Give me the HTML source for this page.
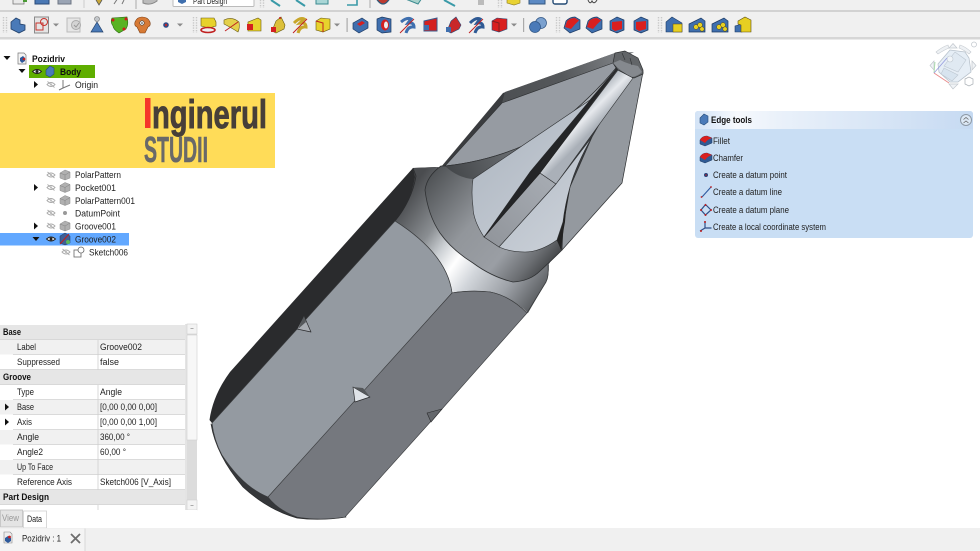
<!DOCTYPE html>
<html><head><meta charset="utf-8"><style>
html,body{margin:0;padding:0;background:#fff;width:980px;height:551px;overflow:hidden}
svg{display:block;filter:blur(.35px)}
text{font-family:"Liberation Sans",sans-serif;font-size:9px;fill:#1f1f1f}
.b{font-weight:bold;fill:#111}
</style></head><body>
<svg width="980" height="551" viewBox="0 0 980 551" xmlns="http://www.w3.org/2000/svg">
<defs>
<linearGradient id="collar" gradientUnits="userSpaceOnUse" x1="428" y1="178" x2="548" y2="278"><stop offset="0" stop-color="#505356"/><stop offset=".4" stop-color="#92969b"/><stop offset=".68" stop-color="#9a9ea4"/><stop offset=".85" stop-color="#6b6e72"/><stop offset="1" stop-color="#36383a"/></linearGradient>
<linearGradient id="neck" gradientUnits="userSpaceOnUse" x1="400" y1="205" x2="548" y2="310"><stop offset="0" stop-color="#4a4c4f"/><stop offset=".22" stop-color="#8a8e92"/><stop offset=".33" stop-color="#cdd1d5"/><stop offset=".43" stop-color="#fff"/><stop offset=".55" stop-color="#d2d6db"/><stop offset=".74" stop-color="#9ea2a8"/><stop offset=".95" stop-color="#505356"/></linearGradient>
<linearGradient id="flank" gradientUnits="userSpaceOnUse" x1="450" y1="172" x2="590" y2="115"><stop offset="0" stop-color="#44474a"/><stop offset=".5" stop-color="#6e7276"/><stop offset="1" stop-color="#aeb3b9"/></linearGradient>
<linearGradient id="strip" gradientUnits="userSpaceOnUse" x1="575" y1="112" x2="593" y2="130"><stop offset="0" stop-color="#aeb4bc"/><stop offset=".45" stop-color="#e6e9ed"/><stop offset="1" stop-color="#aab0b8"/></linearGradient>
<linearGradient id="mid" gradientUnits="userSpaceOnUse" x1="490" y1="240" x2="550" y2="178"><stop offset="0" stop-color="#92969c"/><stop offset="1" stop-color="#a6abb2"/></linearGradient>
<linearGradient id="lface" gradientUnits="userSpaceOnUse" x1="480" y1="170" x2="560" y2="250"><stop offset="0" stop-color="#b4bcc6"/><stop offset="1" stop-color="#c9cfd7"/></linearGradient>
<linearGradient id="band" gradientUnits="userSpaceOnUse" x1="505" y1="92" x2="615" y2="50"><stop offset="0" stop-color="#4d5053"/><stop offset=".5" stop-color="#55585b"/><stop offset="1" stop-color="#7b7e82"/></linearGradient>
<linearGradient id="hdr" x1="0" x2="1" y1="0" y2="0"><stop offset="0" stop-color="#d3e3f6"/><stop offset=".15" stop-color="#f6f9fd"/><stop offset=".3" stop-color="#eaf1fa"/><stop offset="1" stop-color="#c6daf2"/></linearGradient>
<symbol id="eh" overflow="visible"><path d="M-4 0Q0-4 4 0Q0 4-4 0Z" fill="none" stroke="#aaa" stroke-width=".9"/><path d="M-3.5-3L3.5 3" stroke="#aaa" stroke-width=".9"/><circle r="1.1" fill="#bbb"/></symbol>
<symbol id="ev" overflow="visible"><path d="M-4.5 0Q0-4 4.5 0Q0 4-4.5 0Z" fill="#fff" stroke="#222" stroke-width=".9"/><circle r="1.5" fill="#222"/></symbol>
<symbol id="ar" overflow="visible"><path d="M-2-3.5L2 0L-2 3.5Z" fill="#111"/></symbol>
<symbol id="ad" overflow="visible"><path d="M-3.5-2L3.5-2L0 2Z" fill="#111"/></symbol>
<symbol id="dd" overflow="visible"><path d="M-3-1.5L3-1.5L0 1.5Z" fill="#8a8a8a"/></symbol>
<symbol id="grip" overflow="visible"><path d="M-1.5-8V8M1.5-8V8" stroke="#c8c8c8" stroke-width="1.4" stroke-dasharray="1.4 1.2"/></symbol>
<symbol id="gp" overflow="visible"><path d="M-5-2L0-5L5-3V3L0 5L-5 3Z" fill="#b0b0b0" stroke="#8c8c8c" stroke-width=".5"/><path d="M-5-2L0 0L5-3M0 0V5" fill="none" stroke="#808080" stroke-width=".5"/></symbol>
<symbol id="bred" overflow="visible"><path d="M-7-2L2-7L8-3V3L-1 8L-7 4Z" fill="#3f6fae" stroke="#1d3a63" stroke-width=".7"/><path d="M-3-1L2-4L5-2L0 1Z" fill="#d42020"/></symbol>
<symbol id="rblue" overflow="visible"><path d="M-8 3L-6-4Q-2-8 3-8L8-5V4L-2 8Z" fill="#3f6fae" stroke="#1d3a63" stroke-width=".7"/><path d="M-7 2L-5-4Q-2-7 3-7L7-4.500Q3-1-1 4Z" fill="#d91f1f"/></symbol>
<symbol id="rbox" overflow="visible"><path d="M-7-4L0-8L7-5V5L0 8L-7 5Z" fill="#3f6fae" stroke="#1d3a63" stroke-width=".7"/><path d="M-5-3L5-4V4L-2 6L-5 4Z" fill="#d91f1f"/></symbol>
<symbol id="fil" overflow="visible"><path d="M-6 3V-1Q-4-5 1-5L6-3V2L-1 5Z" fill="#2f5a94" stroke="#1d3a63" stroke-width=".5"/><path d="M-6-1Q-4-5 1-5L6-3Q2-2-1 2Z" fill="#d91f1f"/></symbol>
<symbol id="by" overflow="visible"><path d="M-8 7V-1L4-7L8-4V7Z" fill="#3f6fae" stroke="#1d3a63" stroke-width=".7"/><g fill="#e6cf22" stroke="#5c4d10" stroke-width=".5"><circle cx="-1" cy="2" r="2.400"/><circle cx="3" cy="0" r="2.400"/><circle cx="5" cy="4" r="2.200"/></g></symbol>
</defs>

<rect width="980" height="551" fill="#fff"/>

<!-- toolbars -->
<rect width="980" height="39" fill="#f0f0f0"/>
<rect y="10" width="980" height="2" fill="#d2d2d2"/>
<rect y="37" width="980" height="2.500" fill="#d6d6d6"/>

<!-- top row remnants -->
<g>
<rect x="13" y="-6" width="11" height="10" fill="#e9e9e9" stroke="#777" stroke-width=".8"/><rect x="23" y="-2" width="4" height="4" fill="#4a9a35"/>
<rect x="35" y="-8" width="14" height="12" fill="#4a78b4" stroke="#2a4a78"/>
<rect x="58" y="-8" width="13" height="12" fill="#9aa4b4" stroke="#6e7684"/>
<path d="M84-2V8" stroke="#ccc"/>
<path d="M96 0L99 5L102 0" fill="#c9a83a" stroke="#555" stroke-width=".8"/><path d="M114 4L118-2M122 4L124 0" stroke="#777" fill="none"/>
<path d="M136-2V9" stroke="#aaa"/>
<path d="M143 3Q150 6 157 1V-3H143Z" fill="#bbb" stroke="#888"/>
<rect x="173" y="-4" width="81" height="10.500" rx="1" fill="#fff" stroke="#bbb"/>
<path d="M178-2H186V2L182 4L178 2Z" fill="#3f6fae"/>
<text x="193" y="4" textLength="34" lengthAdjust="spacingAndGlyphs">Part Design</text>
<use href="#grip" x="262" y="0"/>
<g stroke="#3a9aa8" stroke-width="2" fill="none"><path d="M271 0L280 6"/><path d="M296 0L305 6"/></g>
<path d="M316-2H328V4H316Z" fill="#a9d6d6" stroke="#3a8a90"/>
<path d="M347 5H357V0" fill="none" stroke="#3a9aa8" stroke-width="1.600"/>
<path d="M370-2V8" stroke="#aaa"/>
<path d="M376-2Q383 10 390-2" fill="#bd3a30" stroke="#2f5a7a" stroke-width="1.300"/>
<path d="M408 0L418 4L422-2Z" fill="#a8d2cc" stroke="#3a8a90"/>
<path d="M444 0L455 6" stroke="#3a9aa8" stroke-width="2"/>
<rect x="478" y="-2" width="6" height="7" fill="#bbb"/>
<use href="#grip" x="500" y="0"/>
<path d="M507 0L514-3L520 0V3L514 5L507 3Z" fill="#e8d232" stroke="#8a7a20" stroke-width=".6"/>
<rect x="529" y="-6" width="16" height="10" fill="#5c8ac4" stroke="#35577f"/>
<rect x="553" y="-6" width="14" height="10" rx="2" fill="#fff" stroke="#234a74" stroke-width="1.400"/>
<path d="M588 0Q590 5 592 1Q594 5 597 0" fill="none" stroke="#444"/>
</g>

<!-- row 2 -->
<g transform="translate(0,25)">
<use href="#grip" x="5"/><use href="#grip" x="195"/><use href="#grip" x="558"/><use href="#grip" x="660"/>
<path d="M11-3L16-7L20-5V-1L25 0V5L19 8L11 4Z" fill="#4a7ab8" stroke="#213f68" stroke-width=".8"/>
<rect x="34.500" y="-8" width="14" height="16" fill="#e4e4e4" stroke="#8a8a8a"/><rect x="36" y="-2" width="7" height="7" fill="none" stroke="#c8332d"/><circle cx="44" cy="-3" r="3.500" fill="none" stroke="#c8332d"/>
<use href="#dd" x="56"/>
<rect x="67" y="-7" width="13" height="14" fill="#e6e6e6" stroke="#bbb"/><circle cx="76" cy="0" r="4.500" fill="#d4d4d4" stroke="#aaa"/><path d="M74 0L76 2L79-2" fill="none" stroke="#999"/>
<path d="M97-3L91 7H103Z" fill="#4a7ab8" stroke="#213f68" stroke-width=".7"/><circle cx="97" cy="-6" r="2.500" fill="#c2c6ca" stroke="#777" stroke-width=".6"/>
<path d="M112-7L127-8Q129-1 126 4L119 8Q113 4 113 1Q110-3 112-7Z" fill="#59b324" stroke="#2c6b12" stroke-width=".6"/><g fill="#d11c1c"><circle cx="113" cy="-5" r="1.500"/><circle cx="126" cy="-6" r="1.500"/><circle cx="124" cy="4" r="1.500"/></g>
<path d="M135-3Q137-8 142-8Q148-8 150-3Q151 1 148 2L145 8H140L137 2Q134 1 135-3Z" fill="#d77a35" stroke="#7a3c12" stroke-width=".6"/><circle cx="142" cy="-2" r="2.200" fill="#fff" stroke="#333" stroke-width=".6"/><circle cx="142" cy="-2" r=".8" fill="#222"/>
<circle cx="166" cy="0" r="2.800" fill="#2f4d86"/><circle cx="166" cy="0" r="1.200" fill="#c0282a"/>
<use href="#dd" x="180"/>
<path d="M201-7H214L216-3V1L209 3L201 1Z" fill="#e7d22c" stroke="#6a5a10" stroke-width=".6"/><ellipse cx="208" cy="5" rx="7" ry="2.500" fill="none" stroke="#c02020" stroke-width="1.600"/>
<path d="M224-5Q232-9 239-3Q240 3 238 7Q230 2 224-1Z" fill="#e4d04a" stroke="#6a5a10" stroke-width=".6"/><path d="M225 6L238-3" stroke="#c02020"/>
<path d="M248-3L258-7L261-5V6H248Z" fill="#e7d22c" stroke="#6a5a10" stroke-width=".6"/><rect x="247" y="-1" width="6" height="6" fill="#d42020"/>
<path d="M272 6L276-4L281-8L285 0L284 4L276 8Z" fill="#dcc03a" stroke="#6a5a10" stroke-width=".6"/><rect x="271" y="2" width="5" height="5" fill="#d42020"/><circle cx="280" cy="-7" r="1" fill="#c02020"/>
<path d="M294-2Q300-8 304-6L300-2Q306-3 306 2Q300 1 298 8" fill="none" stroke="#c8a62a" stroke-width="3"/><path d="M293 8L307-6" stroke="#c02020"/>
<path d="M316-4L321-7L330-6V4L323 7L316 5Z" fill="#e7d22c" stroke="#6a5a10" stroke-width=".6"/><path d="M316-4L323-2V7" fill="none" stroke="#c02020"/>
<use href="#dd" x="337"/>
<rect x="346.500" y="-7" width="1.200" height="14" fill="#aaa"/>
<use href="#bred" x="360"/>
<path d="M377-6L382-8L391-6V7L382 8L377 5Z" fill="#3f6fae" stroke="#1d3a63" stroke-width=".7"/><ellipse cx="385" cy="0" rx="4" ry="5.500" fill="#d42020"/><ellipse cx="386" cy="0" rx="2" ry="3.500" fill="#eee"/>
<path d="M401-3Q407-8 411-6L408-2Q414-3 414 2Q408 1 406 8" fill="none" stroke="#3f6fae" stroke-width="3"/><path d="M400 8L414-6" stroke="#c02020"/>
<path d="M424-4L437-7V6H424Z" fill="#d42020" stroke="#3a5a8c"/><rect x="424" y="0" width="5" height="5" fill="#3f6fae"/>
<path d="M447 6L451-4L456-8L461 0L459 4L451 8Z" fill="#c8282a" stroke="#2a4a78" stroke-width=".6"/><rect x="446" y="2" width="5" height="5" fill="#3f6fae"/>
<path d="M470-2Q476-8 480-6L477-2Q483-3 483 2Q477 1 475 8" fill="none" stroke="#2f5a94" stroke-width="3"/><path d="M469 8L483-6" stroke="#c02020"/>
<path d="M492-4L497-7L507-6V4L499 7L492 5Z" fill="#d91f1f" stroke="#2a4a78" stroke-width=".6"/><path d="M492-4L499-2V7" fill="none" stroke="#802020"/>
<use href="#dd" x="514"/>
<rect x="523" y="-7" width="1.200" height="14" fill="#aaa"/>
<circle cx="541" cy="-2" r="5.500" fill="#7ba1cf" stroke="#2e5484" stroke-width=".7"/><circle cx="535" cy="2" r="5.500" fill="#4a7ab8" stroke="#2e5484" stroke-width=".7"/>
<use href="#rblue" x="572"/><use href="#rblue" x="594"/><use href="#rbox" x="617"/><use href="#rbox" x="641"/>
<path d="M666 7V-3L672-8L682-2V7Z" fill="#3f6fae" stroke="#1d3a63" stroke-width=".6"/><rect x="673" y="-1" width="9" height="8" fill="#e6cf22" stroke="#5c4d10" stroke-width=".5"/>
<use href="#by" x="697"/><use href="#by" x="720"/>
<path d="M735 7V1L742-1V7Z" fill="#3f6fae" stroke="#1d3a63" stroke-width=".6"/><path d="M738-4L745-8L751-5V7H741V0L738-1Z" fill="#e6cf22" stroke="#5c4d10" stroke-width=".6"/>
</g>

<!-- tree -->
<rect x="29" y="65" width="66" height="13" fill="#5fae00"/>
<rect x="0" y="233" width="129" height="12.500" fill="#62a8ff"/>
<use href="#ad" x="7" y="58"/><use href="#ad" x="22" y="71"/>
<path d="M18 53H24L26 55V64H18Z" fill="#f4f4f4" stroke="#777" stroke-width=".7"/><path d="M20 58L23 56L25 58V61L22 63L20 61Z" fill="#2e5a9c"/><circle cx="24" cy="59" r="1.300" fill="#c82020"/>
<text class="b" x="32" y="62" textLength="33" lengthAdjust="spacingAndGlyphs">Pozidriv</text>
<use href="#ev" x="37" y="71.500"/>
<path d="M46 70L50 66L54 68V74L50 77L46 75Z" fill="#4a7ab8" stroke="#234a78" stroke-width=".6"/>
<text class="b" x="60" y="75" textLength="21" lengthAdjust="spacingAndGlyphs">Body</text>
<use href="#ar" x="36" y="84.500"/><use href="#eh" x="51" y="84.500"/>
<path d="M63 80V88M63 88L70 85M63 88L59 90" stroke="#777" stroke-width="1" fill="none"/>
<text x="75" y="88" textLength="23" lengthAdjust="spacingAndGlyphs">Origin</text>

<g><use href="#eh" x="51" y="175"/><use href="#gp" x="65" y="175"/><text x="75" y="178" textLength="46" lengthAdjust="spacingAndGlyphs">PolarPattern</text></g>
<g><use href="#ar" x="36" y="187.500"/><use href="#eh" x="51" y="187.500"/><use href="#gp" x="65" y="187.500"/><text x="75" y="191" textLength="41" lengthAdjust="spacingAndGlyphs">Pocket001</text></g>
<g><use href="#eh" x="51" y="200.500"/><use href="#gp" x="65" y="200.500"/><text x="75" y="204" textLength="60" lengthAdjust="spacingAndGlyphs">PolarPattern001</text></g>
<g><use href="#eh" x="51" y="213"/><circle cx="65" cy="213" r="2" fill="#999"/><text x="75" y="216.500" textLength="45" lengthAdjust="spacingAndGlyphs">DatumPoint</text></g>
<g><use href="#ar" x="36" y="226"/><use href="#eh" x="51" y="226"/><use href="#gp" x="65" y="226"/><text x="75" y="229.500" textLength="41" lengthAdjust="spacingAndGlyphs">Groove001</text></g>
<g><use href="#ad" x="36" y="239"/><use href="#ev" x="51" y="239"/><path d="M60 236L65 233L70 236V243L65 245L60 243Z" fill="#3f5f96" stroke="#1d3a63" stroke-width=".5"/><path d="M60 244L69 234" stroke="#c02020"/><circle cx="68" cy="242" r="2" fill="#5cb85c"/><text x="75" y="242.500" textLength="41" lengthAdjust="spacingAndGlyphs">Groove002</text></g>
<g><use href="#eh" x="66" y="252"/><rect x="74" y="250" width="7" height="7" fill="#fff" stroke="#666" stroke-width=".8"/><circle cx="81" cy="250" r="3" fill="#fff" stroke="#666" stroke-width=".8"/><text x="89" y="255.500" textLength="39" lengthAdjust="spacingAndGlyphs">Sketch006</text></g>

<!-- banner -->
<rect x="0" y="93" width="275" height="75" fill="#ffdc58"/>
<rect x="145" y="98" width="5.500" height="30" fill="#f5352a"/>
<text x="152" y="128" textLength="115" lengthAdjust="spacingAndGlyphs" style="font-family:'Liberation Sans Narrow','Liberation Sans',sans-serif;font-size:40px;font-weight:bold;fill:#473f39;stroke:#473f39;stroke-width:.9px">nginerul</text>
<text x="144" y="162" textLength="64" lengthAdjust="spacingAndGlyphs" style="font-family:'Liberation Sans Narrow','Liberation Sans',sans-serif;font-size:36px;font-weight:bold;fill:#696969;stroke:#696969;stroke-width:.6px">STUDII</text>

<!-- property table -->
<g>
<rect x="0" y="325" width="185" height="185" fill="#fff"/>
<rect x="0" y="325" width="185" height="14.500" fill="#e6e6e6"/>
<rect x="0" y="340" width="185" height="14.500" fill="#f1f1f1"/>
<rect x="0" y="370" width="185" height="14.500" fill="#e6e6e6"/>
<rect x="0" y="400" width="185" height="14.500" fill="#f1f1f1"/>
<rect x="0" y="430" width="185" height="14.500" fill="#f1f1f1"/>
<rect x="0" y="460" width="185" height="14.500" fill="#f1f1f1"/>
<rect x="0" y="490" width="185" height="14.500" fill="#e6e6e6"/>
<g stroke="#cfcfcf" stroke-width=".8"><path d="M0 339.500H185M13 354.500H185M0 369.500H185M0 384.500H185M13 399.500H185M13 414.500H185M13 429.500H185M13 444.500H185M13 459.500H185M13 474.500H185M0 489.500H185M0 504.500H185"/></g>
<g stroke="#cfcfcf" stroke-width=".8"><path d="M98 340V370M98 385V490M98 505V510"/></g>
<text class="b" x="3" y="335" textLength="18" lengthAdjust="spacingAndGlyphs">Base</text>
<text x="17" y="350" textLength="19" lengthAdjust="spacingAndGlyphs">Label</text><text x="100" y="350" textLength="42" lengthAdjust="spacingAndGlyphs">Groove002</text>
<text x="17" y="365" textLength="43" lengthAdjust="spacingAndGlyphs">Suppressed</text><text x="100" y="365" textLength="19" lengthAdjust="spacingAndGlyphs">false</text>
<text class="b" x="3" y="380" textLength="28" lengthAdjust="spacingAndGlyphs">Groove</text>
<text x="17" y="395" textLength="17" lengthAdjust="spacingAndGlyphs">Type</text><text x="100" y="395" textLength="22" lengthAdjust="spacingAndGlyphs">Angle</text>
<use href="#ar" x="7" y="407"/>
<text x="17" y="410" textLength="17" lengthAdjust="spacingAndGlyphs">Base</text><text x="100" y="410" textLength="57" lengthAdjust="spacingAndGlyphs">[0,00 0,00 0,00]</text>
<use href="#ar" x="7" y="422"/>
<text x="17" y="425" textLength="15" lengthAdjust="spacingAndGlyphs">Axis</text><text x="100" y="425" textLength="57" lengthAdjust="spacingAndGlyphs">[0,00 0,00 1,00]</text>
<text x="17" y="440" textLength="22" lengthAdjust="spacingAndGlyphs">Angle</text><text x="100" y="440" textLength="30" lengthAdjust="spacingAndGlyphs">360,00 °</text>
<text x="17" y="455" textLength="26" lengthAdjust="spacingAndGlyphs">Angle2</text><text x="100" y="455" textLength="26" lengthAdjust="spacingAndGlyphs">60,00 °</text>
<text x="17" y="470" textLength="36" lengthAdjust="spacingAndGlyphs">Up To Face</text>
<text x="17" y="485" textLength="55" lengthAdjust="spacingAndGlyphs">Reference Axis</text><text x="100" y="485" textLength="71" lengthAdjust="spacingAndGlyphs">Sketch006 [V_Axis]</text>
<text class="b" x="3" y="500" textLength="46" lengthAdjust="spacingAndGlyphs">Part Design</text>
<!-- scrollbar -->
<rect x="185" y="324" width="2" height="186" fill="#e4e4e4"/>
<rect x="187" y="324" width="10" height="186" fill="#dcdcdc"/>
<rect x="187" y="324" width="10" height="10" fill="#f3f3f3" stroke="#cfcfcf" stroke-width=".6"/>
<rect x="187" y="335" width="10" height="105" fill="#f7f7f7" stroke="#cfcfcf" stroke-width=".6"/>
<rect x="187" y="500" width="10" height="10" fill="#f3f3f3" stroke="#cfcfcf" stroke-width=".6"/>
<rect x="190.500" y="328" width="3" height="1" fill="#aaa"/><rect x="190.500" y="505" width="3" height="1" fill="#aaa"/>
</g>

<!-- bottom tabs -->
<rect x="0" y="510" width="197" height="18" fill="#fff"/>
<rect x="0.500" y="510" width="22" height="17" fill="#e4e4e4" stroke="#bdbdbd" stroke-width=".8"/>
<text x="2" y="521" textLength="17" lengthAdjust="spacingAndGlyphs" style="fill:#999">View</text>
<rect x="23.500" y="511" width="23" height="17" fill="#fff" stroke="#d0d0d0" stroke-width=".8"/>
<text x="27" y="522" textLength="15" lengthAdjust="spacingAndGlyphs">Data</text>
<rect x="0" y="528" width="980" height="23" fill="#f0f0f0"/>
<rect x="0" y="529" width="85" height="22" fill="#f4f4f4"/>
<path d="M85 528.500V551" stroke="#d8d8d8"/>
<path d="M4 532H10L12 534V543H4Z" fill="#eee" stroke="#888" stroke-width=".6"/><path d="M5 538L8 536L11 538V541L8 543L5 541Z" fill="#2e5a9c"/><circle cx="9.500" cy="537" r="1.400" fill="#c82020"/>
<text x="22" y="541.500" textLength="39" lengthAdjust="spacingAndGlyphs">Pozidriv : 1</text>
<path d="M71 534L80 543M80 534L71 543" stroke="#6e6e6e" stroke-width="1.800"/>

<!-- MODEL -->
<g stroke-linejoin="round">
<!-- base under tip, closes gaps -->
<path d="M441 167L503 93L615 53L638 60L643 72L622 183L562 250L445 175Z" fill="#3a3c3f"/>
<!-- bottom sliver -->
<path d="M211 424Q216 455 243 487Q268 510 297 518Q320 521 346 517L268 496Z" fill="#35373a" stroke="#2a2b2d" stroke-width=".7"/>
<!-- black face -->
<path d="M413 168L436 167L416 200L395 222L212 423L209.500 420Q213 395 230 372Z" fill="#2a2b2d"/>
<!-- neck -->
<path d="M413 168L438 167L560 245L549 264Q549 276 546 282L528 313Q510 296 490 292Q470 290 452 293Q447 254 395 221Q410 205 415 177Z" fill="url(#neck)"/>
<path d="M395 221Q447 254 452 293Q470 290 490 292Q510 296 527 313" fill="none" stroke="#3a3c3e" stroke-width=".8"/>
<path d="M548 265Q549 276 546 282L527 313" fill="none" stroke="#3a3c3e" stroke-width=".8"/>
<path d="M413 168L416 176Q412 200 395 221" fill="none" stroke="#2a2b2d" stroke-width=".8"/>
<!-- light face -->
<path d="M212 423L395 221Q447 254 452 293L355 402L268 497Q243 487 222 455Q214 440 212 423Z" fill="#949aa1" stroke="#3a3c3e" stroke-width=".6"/>
<!-- dark face -->
<path d="M452 293Q470 290 490 292Q510 296 527 313L442 409L345 517Q320 521 297 517Q278 510 268 497Z" fill="#75787e" stroke="#3a3c3e" stroke-width=".6"/>
<!-- notches -->
<path d="M304 316L297 329L311 332Z" fill="#a8acb2" stroke="#2a2b2d" stroke-width=".7"/><path d="M304 316L298 329L306 322Z" fill="#55585b"/>
<path d="M353 387L370 397L355 402Z" fill="#dfe3e8" stroke="#2a2b2d" stroke-width=".7"/><path d="M353 387L370 397L363 388Z" fill="#55585b"/>
<path d="M427 413L442 409L431 422Z" fill="#64676c" stroke="#2a2b2d" stroke-width=".6"/>
<!-- collar -->
<path d="M441 166Q427 176 425 190Q428 215 440 233Q452 250 473 263Q492 277 513 282Q530 281 540 271Q552 260 562 250L557 240L533 180L473 170L446 166Z" fill="url(#collar)" stroke="#2f3133" stroke-width=".8"/>
<!-- right big face -->
<path d="M562 250L622 183L643 72L630 70L592 137L570 187L563 227Z" fill="#94999f" stroke="#2f3133" stroke-width=".7"/>
<!-- black sliver right -->
<path d="M570 187Q565 205 563 222Q559 234 557 240L561 250Q563 232 565 222Q566 205 570 187Z" fill="#222"/>
<!-- top band -->
<path d="M505 92L615 53L634 52L613 63L613 70L502 103Z" fill="url(#band)"/>
<!-- top flat face -->
<path d="M502 103L613 63L616 68Q590 100 545 135Q500 160 445 166Z" fill="#969ba2" stroke="#2f3133" stroke-width=".6"/>
<!-- flank -->
<path d="M445 166Q500 160 545 135Q590 100 616 68L612 75L590 100L473 179Q458 178 445 166Z" fill="url(#flank)"/>
<path d="M445 166Q500 160 545 135Q590 100 616 68" fill="none" stroke="#2f3133" stroke-width=".7"/>
<!-- upper light face -->
<path d="M473 179L590 100L617 68L530 172L484 237Q473 220 473 207Q471 192 473 179Z" fill="url(#lface)" stroke="#2f3133" stroke-width=".6"/>
<!-- mid strip -->
<path d="M484 237L540 173L556 184L499 247Z" fill="url(#mid)" stroke="#2f3133" stroke-width=".6"/>
<!-- upper strip -->
<path d="M540 173L618 70L633 78L556 184Z" fill="url(#strip)" stroke="#2f3133" stroke-width=".6"/>
<!-- lower light face -->
<path d="M499 247L556 184L592 137Q576 165 570 187Q565 205 563 222L557 240Q540 252 525 252Q510 252 499 247Z" fill="url(#lface)" stroke="#2f3133" stroke-width=".6"/>
<!-- slit -->
<path d="M484 237L530 172L618 67L540 173Z" fill="#242527"/>
<path d="M484 237L540 173L618 68" fill="none" stroke="#222" stroke-width=".6"/>
<!-- tip -->
<path d="M613 63L615 53L625 51L638 58L643 70L643 74L634 78L618 70Z" fill="#626568" stroke="#2f3133" stroke-width=".7"/>
<path d="M613 63Q621 72 632 77Q638 76 642 72L638 66Q628 64 620 60Z" fill="#85898e"/>
<path d="M622 53L625 60M630 58L632 65" stroke="#2f3133" stroke-width=".6" fill="none"/>
</g>

<!-- navicube -->
<g>
<path d="M950 50L965 52L969 58L971 72L958 82L950 82L939 72L938 64Z" fill="#e6eef6" stroke="#b8c2cc" stroke-width=".8"/>
<path d="M944 66L955 52L966 60L958 72Z" fill="#e0e9f2" stroke="#bcc6d0" stroke-width=".6"/>
<path d="M944 68L958 75L952 81L941 74Z" fill="#d8e4ef" stroke="#bcc6d0" stroke-width=".6"/>
<circle cx="950" cy="59" r="3" fill="#f1f5f9" stroke="#c0c8d0" stroke-width=".6"/>
<path d="M953 43.500L957 48H949Z" fill="#f0f3f6" stroke="#c0c6cc" stroke-width=".7"/>
<path d="M934 61L930 65.500L934 70Z" fill="#f0f3f6" stroke="#c0c6cc" stroke-width=".7"/>
<path d="M972 61L976 65.500L972 70Z" fill="#f0f3f6" stroke="#c0c6cc" stroke-width=".7"/>
<path d="M949 84L953 89L958 84Z" fill="#f0f3f6" stroke="#c0c6cc" stroke-width=".7"/>
<path d="M936 52Q942 47 948 45L949 48Q944 50 938 54Z" fill="#eef1f4" stroke="#c4cad0" stroke-width=".6"/>
<path d="M960 45Q966 47 971 52L969 54Q964 50 959 48Z" fill="#eef1f4" stroke="#c4cad0" stroke-width=".6"/>
<circle cx="974" cy="44.500" r="2.500" fill="#fff" stroke="#c0c6cc" stroke-width=".7"/>
<path d="M965 79L969 77L973 79V84L969 86L965 84Z" fill="#fff" stroke="#aab0b6" stroke-width=".7"/>
<path d="M934 73L949 83" stroke="#e88a8a" stroke-width=".9"/><path d="M934 73L935 62" stroke="#a8dca8" stroke-width=".9"/><path d="M934 73L947 58" stroke="#9aa0e0" stroke-width=".9"/>
</g>

<!-- edge tools panel -->
<rect x="695" y="111" width="278" height="127" rx="3" fill="#c9def4"/>
<path d="M695 129V114a3 3 0 0 1 3-3H970a3 3 0 0 1 3 3V129Z" fill="url(#hdr)"/>
<path d="M700 118L704 114L708 116V122L704 125L700 123Z" fill="#4a7ab8" stroke="#234a78" stroke-width=".6"/>
<text class="b" x="711" y="123" textLength="41" lengthAdjust="spacingAndGlyphs">Edge tools</text>
<circle cx="966" cy="120" r="5.500" fill="#dce8f5" stroke="#8e9aa6"/>
<path d="M963.500 119.500L966 117.500L968.500 119.500M963.500 123L966 121L968.500 123" fill="none" stroke="#666" stroke-width=".8"/>
<use href="#fil" x="706" y="141"/>
<use href="#fil" x="706" y="158"/>
<circle cx="706" cy="175" r="2" fill="#28447a"/><circle cx="706" cy="175" r=".8" fill="#c02020"/>
<path d="M702 197L711 187" stroke="#2f5aa0" stroke-width="1.100"/><circle cx="701.500" cy="197" r=".9" fill="#c02020"/><circle cx="711" cy="187" r=".9" fill="#c02020"/>
<path d="M705.500 204.500L711 210L705.500 215L701 210Z" fill="none" stroke="#2f4f88" stroke-width="1.200"/><g fill="#c02020"><circle cx="705.500" cy="205" r="1"/><circle cx="711" cy="210" r="1"/><circle cx="705.500" cy="215" r="1"/><circle cx="701" cy="210" r="1"/></g>
<path d="M705 221V228L700 231M705 228H711.500" fill="none" stroke="#2f4f88" stroke-width="1.200"/><circle cx="705" cy="222" r="1" fill="#c02020"/><circle cx="701" cy="231" r="1" fill="#c02020"/>
<text x="713" y="144" textLength="17" lengthAdjust="spacingAndGlyphs">Fillet</text>
<text x="713" y="161" textLength="30" lengthAdjust="spacingAndGlyphs">Chamfer</text>
<text x="713" y="178" textLength="74" lengthAdjust="spacingAndGlyphs">Create a datum point</text>
<text x="713" y="195" textLength="69" lengthAdjust="spacingAndGlyphs">Create a datum line</text>
<text x="713" y="213" textLength="76" lengthAdjust="spacingAndGlyphs">Create a datum plane</text>
<text x="713" y="230" textLength="113" lengthAdjust="spacingAndGlyphs">Create a local coordinate system</text>
</svg>
</body></html>
